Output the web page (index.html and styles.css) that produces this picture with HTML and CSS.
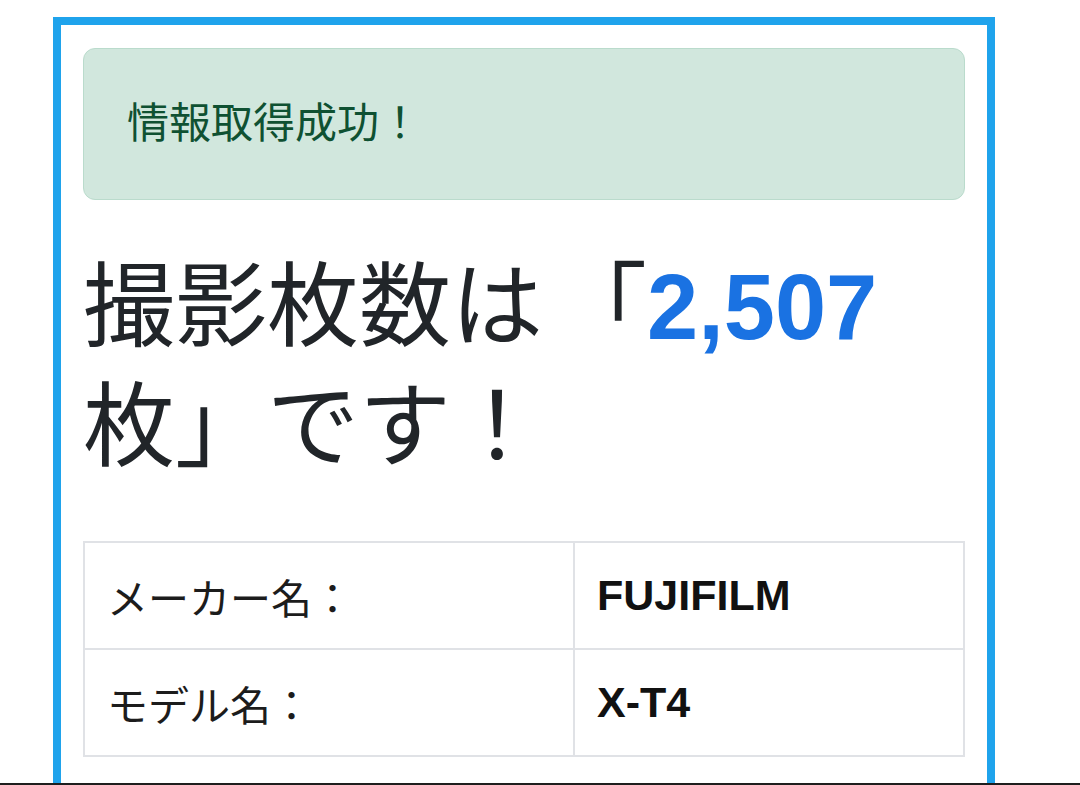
FILE: index.html
```html
<!DOCTYPE html>
<html lang="ja">
	<head>
		<meta charset="UTF-8" />
		<meta name="viewport" content="width=device-width, initial-scale=1.0" />
		<title>撮影枚数チェック</title>
		<link rel="stylesheet" href="styles.css">
	</head>
	<body>
		<div class="screen">
			<div class="result-box">
				<div class="alert-success">情報取得成功！</div>

				<h1 class="shot-count">
					撮影枚数は<span class="bracket">「</span><span class="count">2,507</span>枚」です！
				</h1>

				<table class="camera-info">
					<tr>
						<td class="label">メーカー名：</td>
						<td class="value">FUJIFILM</td>
					</tr>
					<tr>
						<td class="label">モデル名：</td>
						<td class="value">X-T4</td>
					</tr>
				</table>
			</div>
		</div>
		<div class="bottom-edge"></div>
	</body>
</html>
```

FILE: styles.css
```css
* {
	margin: 0;
	padding: 0;
	box-sizing: border-box;
}

body {
	font-family: "Liberation Sans", "Noto Sans CJK JP", sans-serif;
	color: #212529;
	background: #fff;
}

.screen {
	height: 783px;
	overflow: hidden;
	padding: 17px 0 0 53px;
}

.result-box {
	width: 942px;
	height: 900px;
	border: 8px solid #1fa3ec;
	padding: 23px 22px 22px;
}

.alert-success {
	background: #d1e7dd;
	border: 1px solid #badbcc;
	border-radius: 12px;
	color: #0f5132;
	font-size: 42px;
	line-height: 62px;
	padding: 44px 44px 44px 43px;
}

.shot-count {
	font-size: 92px;
	line-height: 120px;
	font-weight: 400;
	margin: 47px 0 54px;
}

.shot-count .bracket {
	margin-left: 12px;
}

.shot-count .count {
	color: #1a72e2;
	font-weight: bold;
}

.camera-info {
	width: 100%;
	border-collapse: collapse;
}

.camera-info td {
	border: 2px solid #e0e2e6;
	height: 107px;
	padding: 0 22px;
	vertical-align: middle;
}

.camera-info .label {
	width: 490px;
	font-size: 41px;
	color: #1c1c1c;
}

.camera-info .value {
	font-size: 43px;
	font-weight: bold;
	color: #111;
}

.bottom-edge {
	height: 2px;
	background: #1e1e1e;
}
```
